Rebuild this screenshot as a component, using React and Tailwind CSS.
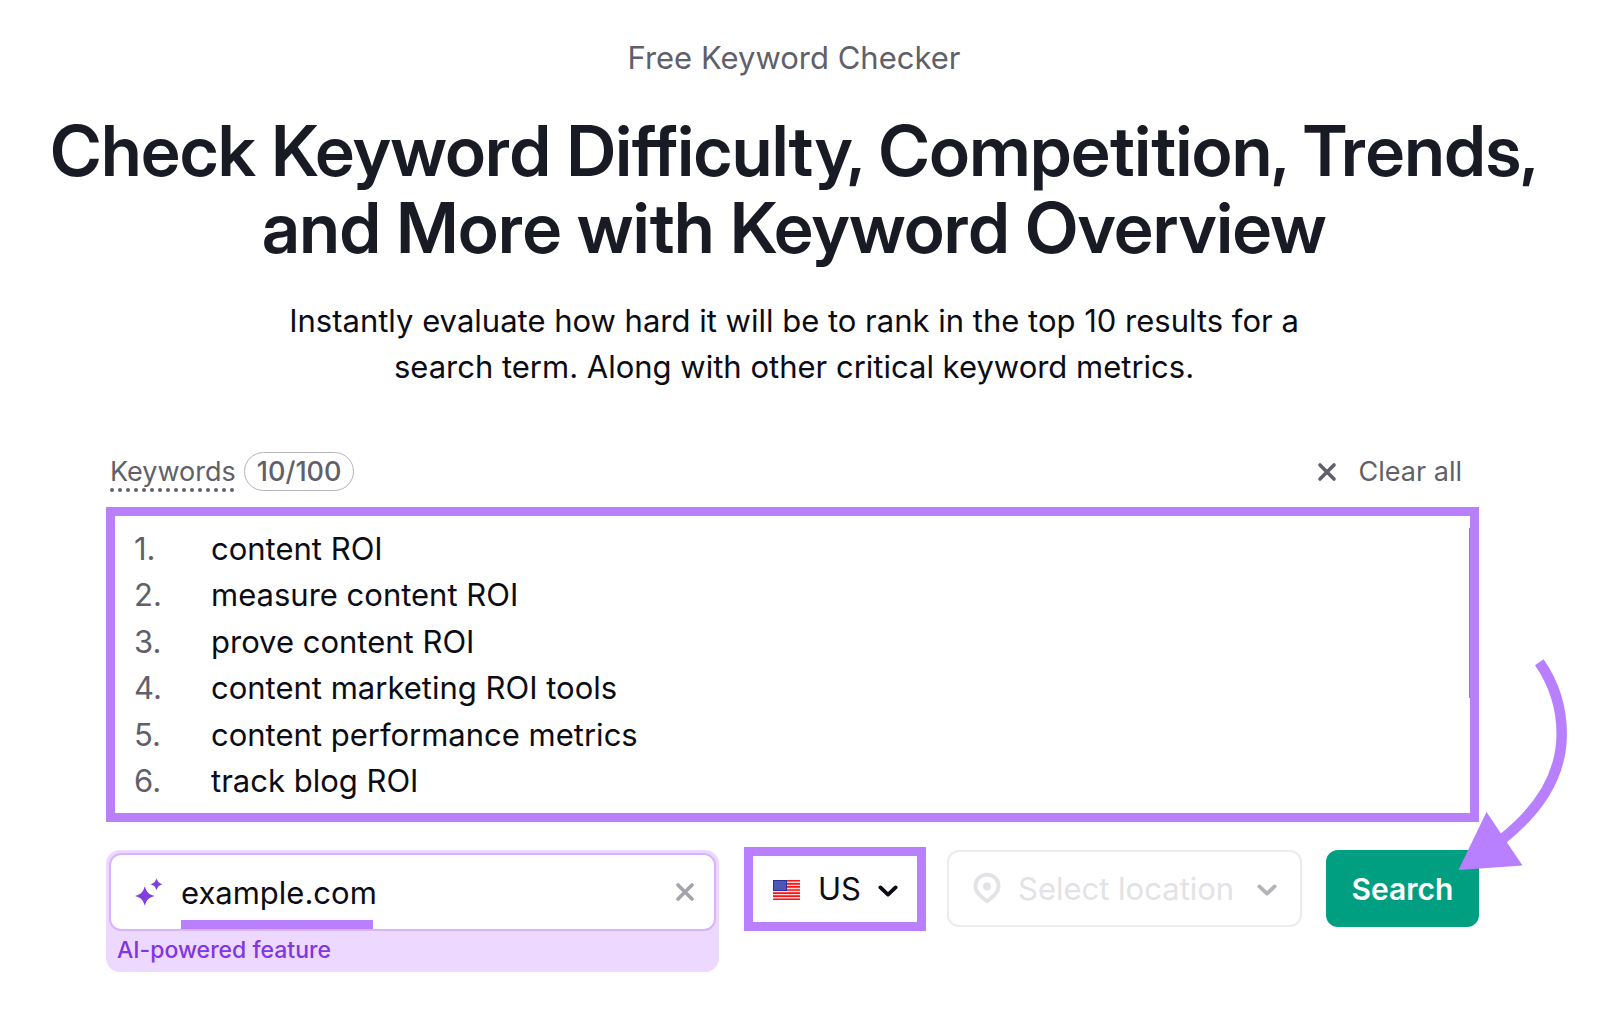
import { useState } from "react";

const INITIAL_KEYWORDS = [
  "content ROI",
  "measure content ROI",
  "prove content ROI",
  "content marketing ROI tools",
  "content performance metrics",
  "track blog ROI",
];

function CrossIcon({ className }) {
  return (
    <svg viewBox="0 0 20 20" className={className} fill="none" stroke="currentColor" strokeWidth="3.6" strokeLinecap="round" aria-hidden="true">
      <path d="M3 3l14 14M17 3L3 17" />
    </svg>
  );
}

function ChevronIcon({ className }) {
  return (
    <svg viewBox="0 0 20 12" className={className} fill="none" stroke="currentColor" strokeWidth="3.8" strokeLinecap="round" strokeLinejoin="round" aria-hidden="true">
      <path d="M2.4 2.4L10 9.6l7.6-7.2" />
    </svg>
  );
}

function SparklesIcon({ className }) {
  return (
    <svg viewBox="0 0 28 28" className={className} fill="currentColor" aria-hidden="true">
      <path d="M9.800 8.200C11.900 14.600 13.200 15.900 19.600 18C13.200 20.100 11.900 21.400 9.800 27.800C7.700 21.400 6.400 20.100 0 18C6.400 15.900 7.700 14.600 9.800 8.200Z" />
      <path d="M21.500 0.200C22.800 4.000 23.700 4.900 27.500 6.200C23.700 7.500 22.800 8.400 21.500 12.200C20.200 8.400 19.300 7.500 15.500 6.200C19.300 4.900 20.200 4.000 21.500 0.200Z" />
    </svg>
  );
}

function PinIcon({ className }) {
  return (
    <svg viewBox="0 0 28 32" className={className} aria-hidden="true">
      <path d="M14 2.600C7.600 2.600 2.400 7.700 2.400 14c0 6.300 5.600 10.600 11.600 15.400C20 24.600 25.600 20.300 25.600 14 25.600 7.700 20.400 2.600 14 2.600Z" fill="none" stroke="currentColor" strokeWidth="3.800" strokeLinejoin="round" />
      <circle cx="14" cy="14.500" r="4" fill="currentColor" />
    </svg>
  );
}

function UsFlag({ className }) {
  return (
    <svg viewBox="0 0 27 20" className={className} aria-hidden="true">
      <rect width="27" height="20" fill="#ffd9d9" />
      <path d="M0 .7h27M0 3.800h27M0 6.900h27M0 10h27M0 13.100h27M0 16.200h27M0 19.300h27" stroke="#ff1212" strokeWidth="1.700" />
      <rect width="14" height="11" fill="#2a2fa0" />
      <rect x="1" y="1" width="12" height="9" fill="#4d57b5" />
    </svg>
  );
}

function ArrowAnnotation() {
  return (
    <svg viewBox="0 0 112 216" className="pointer-events-none absolute -top-[193px] -right-[90px] h-[216px] w-[112px]" aria-hidden="true">
      <path d="M82.300 5.300C98 28 104.700 52 104.700 77C104.700 117 83 153 43 184" fill="none" stroke="#b87fff" strokeWidth="10.500" />
      <path d="M1.500 213L29.500 155L65.500 208.500Z" fill="#b87fff" />
    </svg>
  );
}

export default function App() {
  const [keywords, setKeywords] = useState(INITIAL_KEYWORDS.join("\n"));
  const [domain, setDomain] = useState("example.com");
  const lines = keywords.split("\n");

  return (
    <main className="min-h-screen bg-white pt-[35px] pr-3 font-['Inter',sans-serif] text-[#0b0c14]">
      <header className="text-center">
        <p className="text-[31px] leading-normal text-[#5f606b]">Free Keyword Checker</p>
        <h1 className="mt-[30px] font-['Inter_Display','Inter',sans-serif] text-[70px] leading-[77px] font-semibold text-[#181b24]">
          Check Keyword Difficulty, Competition, Trends,
          <br />
          and More with Keyword Overview
        </h1>
        <p className="mt-8 text-[31px] leading-normal">
          Instantly evaluate how hard it will be to rank in the top 10 results for a
          <br />
          search term. Along with other critical keyword metrics.
        </p>
      </header>

      <form className="mt-[61px] mr-[109px] ml-[106px]" onSubmit={(e) => e.preventDefault()}>
        <div className="flex h-10 items-center text-[27px] leading-10 text-[#5f606b]">
          <div className="relative ml-1">
            <label htmlFor="keywords">Keywords</label>
            <svg className="absolute top-9 left-0 h-1 w-full" aria-hidden="true">
              <line x1="2" y1="2" x2="100%" y2="2" stroke="currentColor" strokeWidth="4" strokeLinecap="round" strokeDasharray="0 8" />
            </svg>
          </div>
          <span className="ml-2 flex h-[39px] items-center rounded-full border border-[#b4b5bd] px-3 font-medium">10/100</span>
          <button type="button" className="mr-[17px] ml-auto flex items-center gap-[22px]" onClick={() => setKeywords("")}>
            <CrossIcon className="size-5" />
            Clear all
          </button>
        </div>

        <div className="relative mt-[15px] flex border-[9px] border-[#b87fff] pt-[10px] pb-2 pl-[19px] text-[31px] leading-normal">
          <ol className="w-[77px] text-[#5f606b]" aria-hidden="true">
            {lines.map((_, i) => (
              <li key={i}>{i + 1}.</li>
            ))}
          </ol>
          <textarea
            id="keywords"
            rows={6}
            value={keywords}
            onChange={(e) => setKeywords(e.target.value)}
            className="block flex-1 resize-none overflow-hidden outline-none"
          />
          <span className="absolute top-3 right-0 h-[170px] w-px bg-[#8b8b8b]" />
        </div>

        <div className="mt-7 flex items-start">
          <div className="flex-1 rounded-[14px] bg-[#edd9ff] p-[3px]">
            <div className="relative flex h-[78px] items-center rounded-[12px] border-2 border-[#d9b3fc] bg-white pr-[19px] pl-6">
              <SparklesIcon className="size-7 text-[#8040dd]" />
              <div className="relative ml-[18px] flex-1 pt-[3px]">
                <input
                  aria-label="Domain"
                  value={domain}
                  onChange={(e) => setDomain(e.target.value)}
                  className="block w-full text-[31px] leading-normal outline-none"
                />
                <span className="absolute top-[53px] left-0 h-[9px] w-48 bg-[#b87fff]" />
              </div>
              <button type="button" aria-label="Clear domain" onClick={() => setDomain("")}>
                <CrossIcon className="size-5 text-[#a3a3aa]" />
              </button>
            </div>
            <p className="pl-2 text-[23px] leading-[38px] font-medium text-[#8036e0]">AI-powered feature</p>
          </div>

          <div className="relative -mt-[3px] ml-[25px] h-[84px] w-[182px] border-[9px] border-[#b87fff]">
            <select aria-label="Country" className="h-full w-full appearance-none pt-0.5 pl-[65px] text-[31px] outline-none">
              <option>US</option>
            </select>
            <UsFlag className="pointer-events-none absolute top-6 left-5 h-5 w-[27px]" />
            <ChevronIcon className="pointer-events-none absolute top-[29px] right-[19px] h-3 w-5" />
          </div>

          <div className="relative ml-[21px] h-[77px] w-[355px]">
            <select
              aria-label="Location"
              disabled
              className="h-full w-full appearance-none rounded-[12px] border-2 border-[#ececf0] pt-0.5 pl-[69px] text-[31px] text-[#e3e3e7] opacity-100"
            >
              <option>Select location</option>
            </select>
            <PinIcon className="pointer-events-none absolute top-[22px] left-[26px] h-8 w-7 text-[#e3e3e7]" />
            <ChevronIcon className="pointer-events-none absolute top-[34px] right-[25px] h-3 w-5 text-[#b3b3b8]" />
          </div>

          <div className="relative ml-6">
            <button type="submit" className="h-[77px] w-[153px] rounded-[12px] bg-[#009f81] pt-0.5 text-[30px] font-semibold text-white">
              Search
            </button>
            <ArrowAnnotation />
          </div>
        </div>
      </form>
    </main>
  );
}
